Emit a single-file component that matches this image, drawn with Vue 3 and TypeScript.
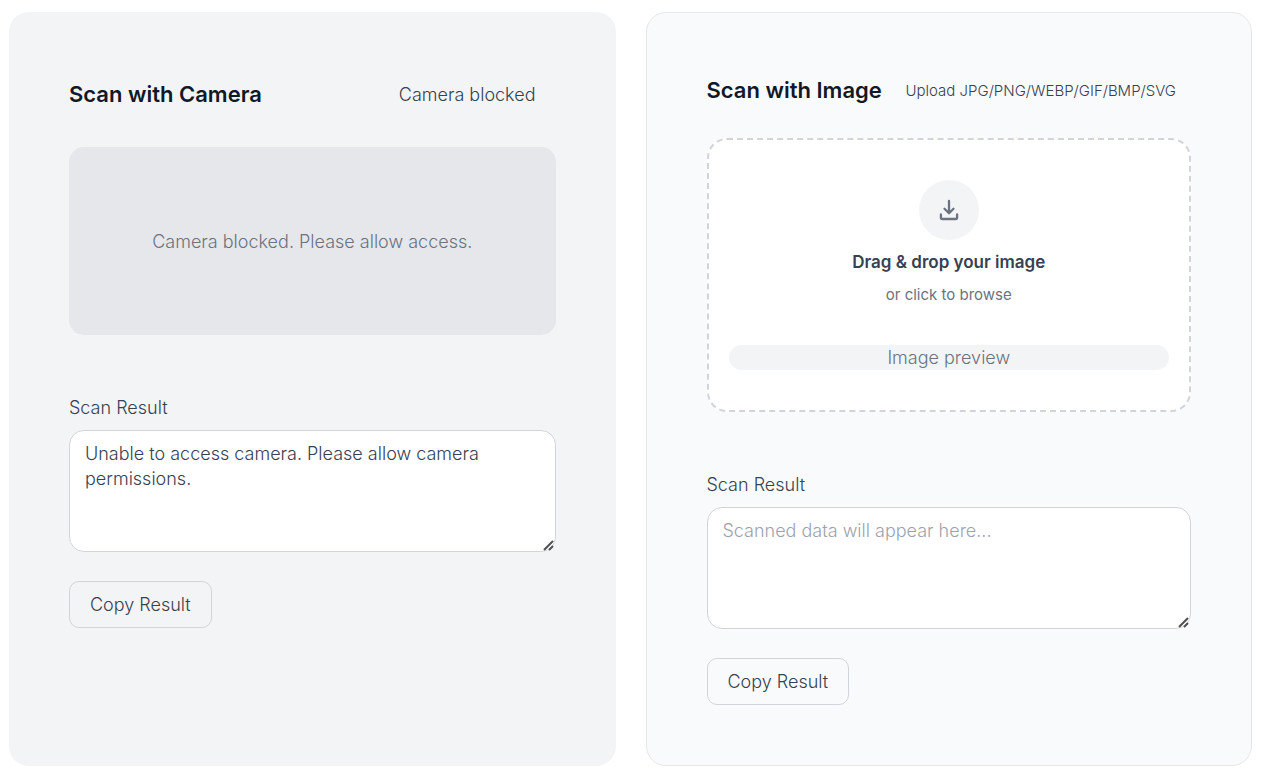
<script setup lang="ts">
import { ref } from 'vue'

const cameraResult = ref<string>('Unable to access camera. Please allow camera permissions.')
const imageResult = ref<string>('')

function copy(text: string): void {
  navigator.clipboard?.writeText(text)
}
</script>

<template>
  <main class="page">
    <section class="card camera">
      <header class="head">
        <h2>Scan with Camera</h2>
        <span class="status">Camera blocked</span>
      </header>
      <div class="video">Camera blocked. Please allow access.</div>
      <label class="label" for="camera-result">Scan Result</label>
      <textarea id="camera-result" v-model="cameraResult" class="result"></textarea>
      <button type="button" class="copy" @click="copy(cameraResult)">Copy Result</button>
    </section>

    <section class="card image">
      <header class="head">
        <h2>Scan with Image</h2>
        <span class="formats">Upload JPG/PNG/WEBP/GIF/BMP/SVG</span>
      </header>
      <div class="drop">
        <button type="button" class="browse">
          <span class="circle">
            <svg width="20" height="22" viewBox="0 0 20 22" fill="none" stroke="currentColor" stroke-width="2.3" stroke-linejoin="round" stroke-linecap="round" aria-hidden="true">
              <path d="M10 2V14M5.500 9.800 10 14.200 14.500 9.800M1.900 15.500V19Q1.900 20 2.900 20H17.100Q18.100 20 18.100 19V15.500" />
            </svg>
          </span>
          <span class="title">Drag &amp; drop your image</span>
          <span class="hint">or click to browse</span>
        </button>
        <div class="preview">Image preview</div>
      </div>
      <label class="label" for="image-result">Scan Result</label>
      <textarea id="image-result" v-model="imageResult" class="result" placeholder="Scanned data will appear here..."></textarea>
      <button type="button" class="copy" @click="copy(imageResult)">Copy Result</button>
    </section>
  </main>
</template>

<style>
body {
  background: #fff;
}
</style>

<style scoped>
.page {
  display: grid;
  grid-template-columns: 1fr 1fr;
  gap: 30px;
  padding: 12px 20px 12px 9px;
  font-family: Inter, "Liberation Sans", sans-serif;
  font-size: 18px;
  font-weight: 300;
  line-height: 25px;
  color: #374151;
}
.page * {
  box-sizing: border-box;
}
.card {
  display: flex;
  flex-direction: column;
  border-radius: 20px;
  min-width: 0;
}
.camera {
  padding: 60px;
  background: #f3f4f6;
}
.image {
  padding: 60px;
  background: #f9fafb;
  border: 1px solid #e5e7eb;
}
.head {
  display: flex;
  align-items: center;
  justify-content: space-between;
}
.camera .head {
  height: 45px;
  margin-bottom: 30px;
  padding-right: 20px;
}
.image .head {
  height: 35px;
  margin-bottom: 30px;
  padding-right: 15px;
}
h2 {
  margin: 0;
  font-size: 22px;
  line-height: 35px;
  font-weight: 600;
  color: #111827;
}
.formats {
  font-size: 15px;
}
.video {
  display: flex;
  align-items: center;
  justify-content: center;
  height: 188px;
  border-radius: 15px;
  background: #e5e7eb;
  color: #6b7280;
}
.drop {
  padding: 40px 20px;
  border: 2px dashed #d1d5db;
  border-radius: 20px;
  background: #fff;
}
.browse {
  display: flex;
  flex-direction: column;
  align-items: center;
  width: 100%;
  padding: 0;
  border: 0;
  background: none;
  font: inherit;
  color: inherit;
  cursor: pointer;
}
.circle {
  display: flex;
  align-items: center;
  justify-content: center;
  width: 60px;
  height: 60px;
  margin-bottom: 10px;
  border-radius: 50%;
  background: #f3f4f6;
  color: #6b7280;
}
.title {
  font-size: 17px;
  font-weight: 600;
}
.hint {
  margin-top: 10px;
  font-size: 15px;
  font-weight: 400;
  line-height: 20px;
  color: #6b7280;
}
.preview {
  margin-top: 40px;
  border-radius: 15px;
  background: #f3f4f6;
  color: #6b7280;
  text-align: center;
}
.label {
  margin: 60px 0 10px;
}
.result {
  width: 100%;
  height: 122px;
  margin: 0;
  padding: 10px 15px;
  border: 1px solid #d1d5db;
  border-radius: 15px;
  background: #fff;
  font: inherit;
  color: inherit;
  resize: vertical;
}
.result::placeholder {
  color: #9ca3af;
}
.result::-webkit-resizer {
  background: url("data:image/svg+xml,%3Csvg xmlns='http://www.w3.org/2000/svg' width='15' height='15' fill='none' stroke='%23505050' stroke-width='2'%3E%3Cpath d='M4 14 13 5M9 14 13 10'/%3E%3C/svg%3E") no-repeat right bottom;
}
.copy {
  align-self: flex-start;
  margin-top: 29px;
  padding: 10px 20px;
  border: 1px solid #d1d5db;
  border-radius: 10px;
  background: transparent;
  font: inherit;
  color: inherit;
  cursor: pointer;
}
</style>
